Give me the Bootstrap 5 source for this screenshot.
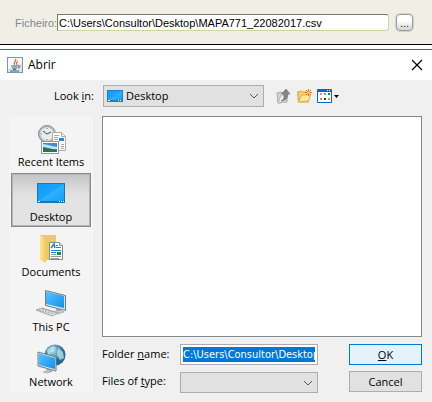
<!DOCTYPE html>
<html lang="pt">
<head>
<meta charset="utf-8">
<meta name="viewport" content="width=device-width, initial-scale=1">
<title>Abrir</title>
<link href="https://cdn.jsdelivr.net/npm/bootstrap@5.3.0/dist/css/bootstrap.min.css" rel="stylesheet">
<style>
body{font-family:"Open Sans","Noto Sans",sans-serif;font-size:11px;line-height:14px;color:#000;background:#f0f0f0}
.file-bar{background:#f0efe6;border-bottom:1px solid #000;padding:14px 19px 13px 15px;font-family:"Liberation Sans",Arial,sans-serif;gap:2px}
.file-bar label{color:#858585;width:40px;white-space:nowrap}
.file-bar input{height:17px;min-width:0;border:1px solid #cfd3a6;border-top-color:#77775f;border-left-color:#77775f;border-radius:0 3px 3px 0;padding:1px 1px 0;font-size:11px;line-height:14px;background:#fff;color:#000}
.more-btn{width:17px;height:17px;border:1px solid #9c9c9c;border-radius:4px;background:linear-gradient(#fff 40%,#d5d5d5);box-shadow:0 0 0 1px #d3d2cc;padding:0;line-height:14px;font-size:11px;color:#222;margin-left:5px}
main{border-top:4px solid #fff}
.title-bar{border-top:1px solid #1470b8;background:#fff;height:31px;padding:0 9px 0 7px}
.title-bar h1{font:12px/16px "Open Sans",sans-serif;margin:0 0 0 5px}
.plain-btn{border:0;background:none;padding:0;line-height:0}
.tool-row{padding:5px 9px 9px}
.tool-set{gap:5px;margin-left:12px}
.look-label{width:94px;padding-right:9px}
.win-select{appearance:none;height:22px;width:100%;border:1px solid #adadad;border-radius:0;background:#e1e1e1;padding:0 20px 0 5px;color:#000;font-size:11px}
.with-icon{padding-left:22px}
.combo .pic{position:absolute;left:4px;top:5px;pointer-events:none}
.combo .arrow{position:absolute;right:5px;top:8px;pointer-events:none}
.look-combo{width:161px}
.places{width:84px;background:#f4f4f4;height:277px;padding:2px}
.place{display:flex;flex-direction:column;align-items:center;width:100%;height:55px;border:1px solid transparent;background:none;padding:4px 0 0;white-space:nowrap;color:#000}
.place.chosen{border:1px solid #8b8b8b;box-shadow:inset 0 0 0 1px #b4b4b4;background:linear-gradient(#c4c4c4,#e2e2e2 40%,#e4e4e4);height:54px;margin-bottom:1px}
.dialog-body{padding:0 10px 8px 9px;gap:9px}
.file-list{height:221px;background:#fff;border:1px solid #828790}
.fields{display:grid;grid-template-columns:78px minmax(0,1fr) 73px;row-gap:6px;margin-top:7px}
.fields label{padding-top:3px}
.fields .combo,.fields .name-input{margin-right:31px}
.fields .win-select{height:21px}
.fields .combo{padding-top:1px}
.fields .combo .arrow{top:9px}
.name-input{font-family:"DejaVu Sans Condensed","DejaVu Sans",sans-serif;font-stretch:condensed;height:21px;border:1px solid #abadb3;border-radius:0;padding:2px;background:#0078d7;color:#fff;min-width:0;line-height:14px;box-shadow:inset 0 0 0 2px #fff}
.win-btn{height:21px;border:1px solid #adadad;background:#e1e1e1;border-radius:0;padding:0;color:#000}
.win-btn.default{border-color:#0078d7;background:#e5f1fb}
</style>
<script src="https://cdn.jsdelivr.net/npm/bootstrap@5.3.0/dist/js/bootstrap.bundle.min.js"></script>
</head>
<body>
<svg width="0" height="0" class="position-absolute" aria-hidden="true">
<defs>
<linearGradient id="screen" x1="0" y1="0" x2="1" y2="1"><stop offset="0" stop-color="#129bfa"/><stop offset=".5" stop-color="#1ca3fd"/><stop offset=".52" stop-color="#2eb1ff"/><stop offset="1" stop-color="#159efb"/></linearGradient>
<linearGradient id="monitor" x1="0" y1="0" x2="1" y2="1"><stop offset="0" stop-color="#58c2ff"/><stop offset="1" stop-color="#168eea"/></linearGradient>
<linearGradient id="folder"><stop offset="0" stop-color="#ffe69a"/><stop offset="1" stop-color="#f1c85f"/></linearGradient>
<radialGradient id="globe" cx=".4" cy=".3"><stop offset="0" stop-color="#a9dcef"/><stop offset="1" stop-color="#216b94"/></radialGradient>
</defs>
</svg>
<header class="file-bar d-flex align-items-center">
<label for="ficheiro">Ficheiro:</label>
<input id="ficheiro" class="flex-grow-1" value="C:\Users\Consultor\Desktop\MAPA771_22082017.csv">
<button class="more-btn" type="button">...</button>
</header>
<main>
<div class="title-bar d-flex align-items-center">
<svg width="16" height="16" viewBox="0 0 16 16" aria-hidden="true"><rect x=".5" y=".5" width="15" height="15" fill="#d9e2e9" stroke="#8195a4"/><path d="M1 1h14v5L1 12z" fill="#f7f9fa"/><path d="M8.500 2c2 2-3 3-1 6M10 4c1 1-1.500 2 0 4" fill="none" stroke="#e46a24" stroke-width="1.200"/><path d="M4 9h7M5 11h5M6 12.500h3M3 14h9M11 9c3-1 2 2 0 2" fill="none" stroke="#436985"/></svg>
<h1>Abrir</h1>
<button class="plain-btn ms-auto" type="button" aria-label="Close"><svg width="12" height="12"><path d="M1 1l10 10M11 1L1 11" stroke="#000" stroke-width="1.200"/></svg></button>
</div>
<div class="tool-row d-flex align-items-center">
<label class="look-label text-end" for="look">Look <u>i</u>n:</label>
<div class="combo look-combo position-relative">
<select id="look" class="win-select with-icon d-block"><option>Desktop</option></select>
<svg class="pic" width="16" height="12"><rect width="16" height="12" fill="#1583d2"/><rect x="1" y="1" width="14" height="9" fill="url(#screen)"/><path d="M1 10.500h2M11 10.500h1M13 10.500h1" stroke="#fff"/></svg>
<svg class="arrow" width="10" height="7"><path d="M1 1l4 4 4-4" fill="none" stroke="#555"/></svg>
</div>
<div class="tool-set d-flex">
<button class="plain-btn" type="button" aria-label="Up one level"><svg width="16" height="16"><path d="M1 5l4-1 1 1h5v9l-9 1z" fill="#d4d4d4" stroke="#aaa"/><path d="M2 15l3-8h7l-2 7z" fill="#ededed" stroke="#b5b5b5"/><path d="M5 13c3-1 3-3 3-7H5.500L10 1l4 5h-2.500c0 5-2 7-6.500 7z" fill="#858585" stroke="#6b6b6b" stroke-width=".6"/></svg></button>
<button class="plain-btn" type="button" aria-label="New folder"><svg width="15" height="16"><path d="M0.500 4l4-1 1 1h6v10h-10z" fill="#f3cf68" stroke="#d3a640"/><path d="M1.500 14l3-7h9l-2 6z" fill="#ffe99c" stroke="#dfb24c"/><path d="M11.500 1v7M8 4.500h7M9 2l5 5M14 2l-5 5" stroke="#f06a2a"/><circle cx="11.500" cy="4.500" r="1.500" fill="#ffc060"/></svg></button>
<button class="plain-btn" type="button" aria-label="View menu"><svg width="22" height="16"><rect y="1" width="15" height="14" rx="1" fill="#0868ca"/><rect x="1" y="4" width="13" height="10" fill="#fff"/><path d="M10 2.500h1M12 2.500h1" stroke="#fff"/><path fill="#a8a0d0" d="M3 5h2v2H3z"/><path fill="#7898df" d="M7 5h2v2H7z"/><path fill="#13992b" d="M11 5h2v2h-2z"/><path fill="#e77a51" d="M3 10h2v2H3z"/><path fill="#173e8c" d="M7 10h2v2H7z"/><path fill="#d4a020" d="M11 10h2v2h-2z"/><path d="M17 7h5l-2.500 3z"/></svg></button>
</div>
</div>
<div class="dialog-body d-flex">
<nav class="places flex-shrink-0" aria-label="Places">
<button class="place" type="button"><svg width="32" height="32"><circle cx="12" cy="11" r="8.500" fill="#b9bfc2" stroke="#858b8e"/><circle cx="12" cy="11" r="6.500" fill="#e8ebed"/><path d="M12 11l-4-3M12 11l4-2" fill="none" stroke="#44494c"/><path d="M12 5v1M12 16v1M6 11h1M17 11h1" stroke="#777"/><path d="M17.500 9.500h9l4 4v14h-13z" fill="#fff" stroke="#aaa"/><path d="M26.500 9.500v4h4M19 12.500h5M19 14.500h4M19 16.500h4M26 21.500h3M26 23.500h3M26 25.500h3" fill="none" stroke="#aaa"/><path d="M24 15h5v3h-5z" fill="#3485bf"/><rect x="6.500" y="18.500" width="17" height="12" fill="#fff" stroke="#999"/><path d="M8 20h14v9H8z" fill="#3c8fd6"/><path d="M8 21l5 1 4 1 5 1v2H8z" fill="#bfe4f4"/><path d="M8 24l5 1 9 2v2H8z" fill="#237853"/></svg>Recent Items</button>
<button class="place chosen" type="button"><svg width="32" height="32"><rect x="2" y="5" width="28" height="20" fill="#1578b5"/><rect x="3" y="6" width="26" height="17" fill="url(#screen)"/><path d="M3 23.500h2M24 23.500h1M26 23.500h1M28 23.500h1" stroke="#fff"/></svg>Desktop</button>
<button class="place" type="button"><svg width="32" height="32"><path d="M5 2h16v25H5z" fill="#edc866"/><path d="M5 2l6 4v24l-6-3z" fill="url(#folder)"/><path d="M14.500 9.500h10l3 3v14h-13z" fill="#fff" stroke="#8a8a8a"/><path d="M24.500 9.500v3h3" fill="#ddd" stroke="#999"/><path d="M16 15l3-4 1 4" fill="none" stroke="#1685cc" stroke-width="1.500"/><path d="M21 12.500h2M21 14.500h5M16 17.500h10M16 19.500h5" stroke="#218aca"/><path d="M22 19h4v3h-4z" fill="#2f7a69"/><path d="M16 21.500h5M16 23.500h10M16 25.500h8" stroke="#999"/></svg>Documents</button>
<button class="place" type="button"><svg width="32" height="32"><path d="M10.500 2.500l20 5v15l-20-5z" fill="#d8e2e8" stroke="#667e8c"/><path d="M11 3.500l18 4.500v12l-18-4z" fill="url(#monitor)"/><path d="M21 20l5 1v3l-4 1z" fill="#8e9da5"/><path d="M18 24l6-2 5 2-6 2z" fill="#c5cdd1" stroke="#8c989e" stroke-width=".5"/><path d="M1 22l6-2 17 5-7 3z" fill="#e4e6e7" stroke="#a4a8aa"/><path d="M4 22l14 4M7 21l14 4" stroke="#999" stroke-dasharray="2 1"/></svg>This PC</button>
<button class="place" type="button"><svg width="32" height="32"><circle cx="20" cy="12" r="10.500" fill="url(#globe)"/><path d="M12 7l6-4 3 2-3 4-3 1-1 4zM23 5l5 4 1 6-4 2-3-5z" fill="#c3e5ec" opacity=".75"/><path d="M3 9l18 5v14l-18-5z" fill="#dce5ea" stroke="#657d8a"/><path d="M4 10.500l16 4.500v11L4 22z" fill="url(#monitor)"/><path d="M12 26l4 1v2l-4 1z" fill="#7d8b93"/><path d="M8 29l5-2 5 1-6 2z" fill="#c2c9cd" stroke="#8d999f" stroke-width=".5"/></svg>Network</button>
</nav>
<section class="flex-grow-1">
<div class="file-list" role="listbox" aria-label="Files"></div>
<form class="fields">
<label for="folder-name">Folder <u>n</u>ame:</label>
<input id="folder-name" class="name-input" value="C:\Users\Consultor\Desktop">
<button class="win-btn default" type="button"><u>O</u>K</button>
<label for="type">Files of <u>t</u>ype:</label>
<div class="combo position-relative"><select id="type" class="win-select d-block"></select><svg class="arrow" width="10" height="7"><path d="M1 1l4 4 4-4" fill="none" stroke="#555"/></svg></div>
<button class="win-btn" type="button">Cancel</button>
</form>
</section>
</div>
</main>
</body>
</html>
